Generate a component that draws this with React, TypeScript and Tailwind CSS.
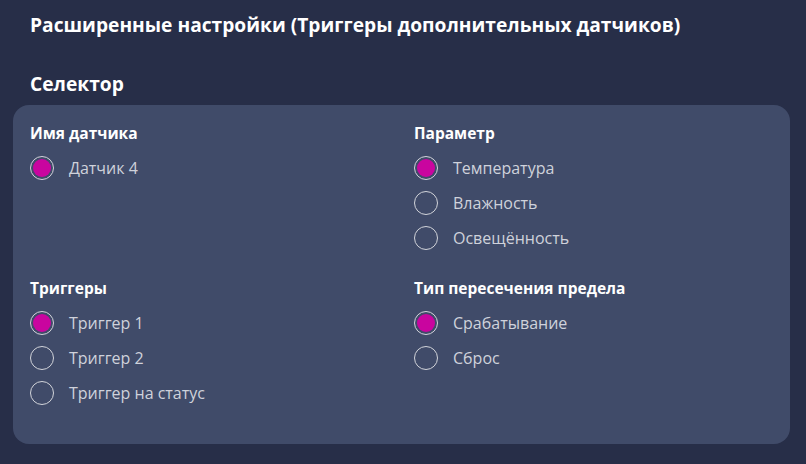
import React from "react";

const Radio = ({ label, checked }: { label: string; checked?: boolean }) => (
  <div className="flex items-center h-[24px] gap-[15px]">
    <div className="w-[24px] h-[24px] rounded-full border border-[#d2d4da] flex items-center justify-center shrink-0">
      {checked && <div className="w-[18px] h-[18px] rounded-full bg-[#c9059f]" />}
    </div>
    <span className="text-[16px] text-[#cfd2db] leading-none">{label}</span>
  </div>
);

const Group = ({ title, items, checked }: { title: string; items: string[]; checked: number }) => (
  <div className="flex flex-col">
    <div className="text-[15.5px] font-bold text-white leading-[20px]">{title}</div>
    <div className="flex flex-col gap-[11px] mt-[13px]">
      {items.map((it, i) => (
        <Radio key={it} label={it} checked={i === checked} />
      ))}
    </div>
  </div>
);

export default function App() {
  return (
    <div
      className="w-[806px] h-[464px] bg-[#272e48] overflow-hidden"
      style={{ fontFamily: '"Open Sans", "Noto Sans", sans-serif' }}
    >
      <div className="px-[30px] pt-[12px]">
        <div className="text-[19.2px] font-bold text-white leading-[26px]">
          Расширенные настройки (Триггеры дополнительных датчиков)
        </div>
        <div className="text-[19.2px] font-bold text-white leading-[26px] mt-[33px]">Селектор</div>
      </div>
      <div className="mx-[13px] mt-[8px] w-[777px] h-[339px] rounded-[16px] bg-[#404b69] pt-[18px] px-[17px]">
        <div className="grid grid-cols-[384px_1fr] gap-y-[28px]">
          <Group title="Имя датчика" items={["Датчик 4"]} checked={0} />
          <Group title="Параметр" items={["Температура", "Влажность", "Освещённость"]} checked={0} />
          <Group title="Триггеры" items={["Триггер 1", "Триггер 2", "Триггер на статус"]} checked={0} />
          <Group title="Тип пересечения предела" items={["Срабатывание", "Сброс"]} checked={0} />
        </div>
      </div>
    </div>
  );
}
